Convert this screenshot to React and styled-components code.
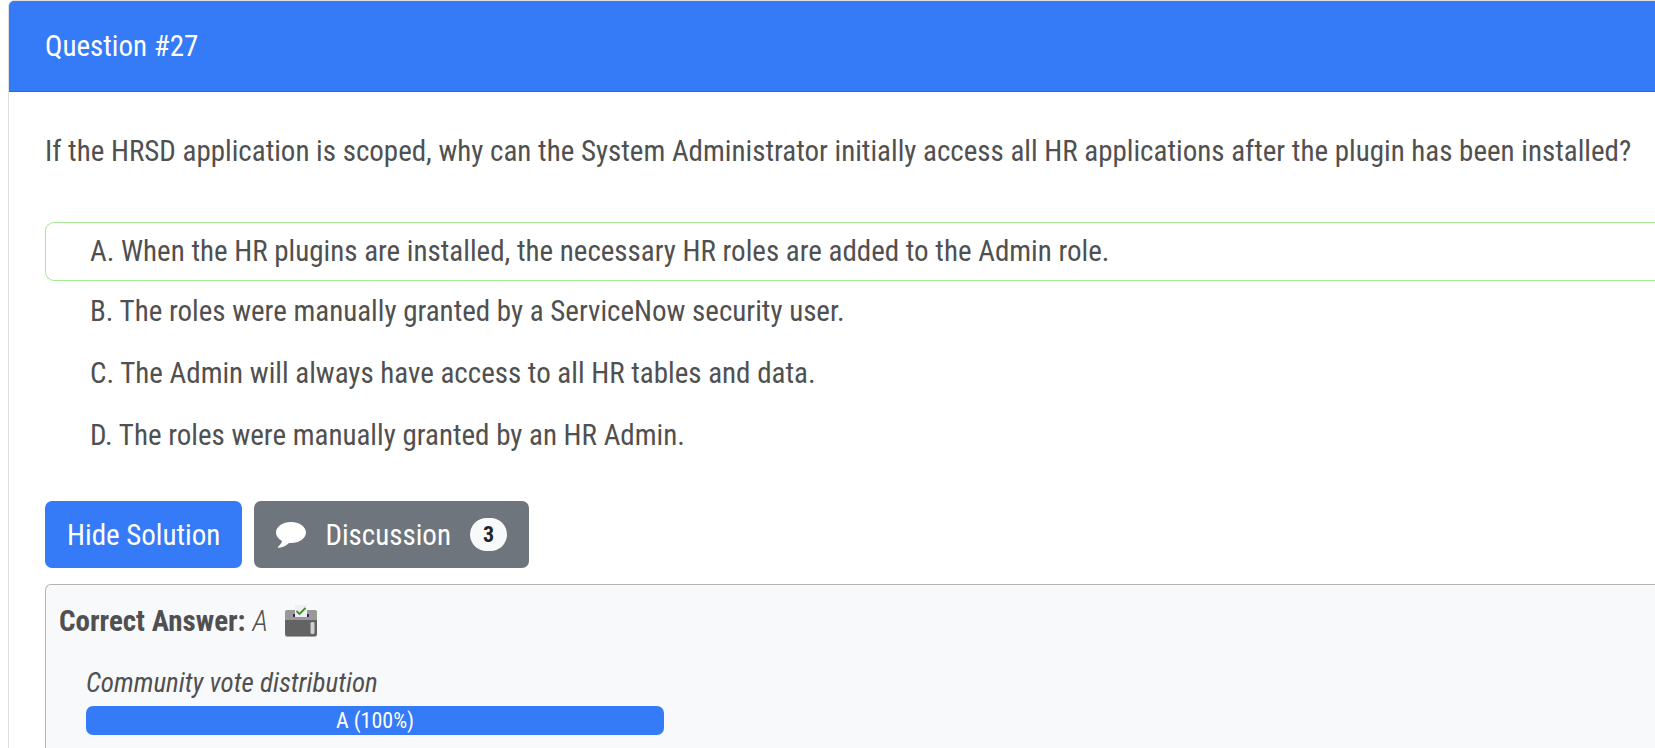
import React from 'react';
import styled, { createGlobalStyle } from 'styled-components';

const GlobalStyle = createGlobalStyle`
  *, *::before, *::after { box-sizing: border-box; }
  body {
    margin: 0;
    background: #fff;
    color: #505050;
    font-family: "Roboto Condensed", Roboto, "Liberation Sans", sans-serif;
    font-size: 29px;
    font-weight: 400;
    line-height: 44px;
  }
`;

const Card = styled.article`
  display: flex;
  flex-direction: column;
  min-height: 100vh;
  margin-left: 8px;
  border: 1px solid #dfdfdf;
  border-width: 1px 0 0 1px;
  border-top-left-radius: 6px;
`;

const CardHeader = styled.header`
  padding: 23px 36px;
  border-bottom: 1px solid #2c68d8;
  border-top-left-radius: 5px;
  background: #357af6;
  color: #fff;
`;

const Title = styled.h1`
  margin: 0;
  font-size: inherit;
  font-weight: 400;
`;

const CardBody = styled.div`
  display: flex;
  flex: 1;
  flex-direction: column;
  padding: 37px 0 0 36px;
`;

const QuestionText = styled.p`
  margin: 0 0 49px;
`;

const Choices = styled.ol`
  margin: 0 0 34px;
  padding: 0;
  list-style: none;
`;

const Choice = styled.li`
  padding: ${(p) => (p.$correct ? '6px 44px 7px' : '8px 45px 10px')};
  border: solid #a5ea94;
  border-width: ${(p) => (p.$correct ? '1px 0 1px 1px' : '0')};
  border-radius: 9px 0 0 9px;
`;

const Actions = styled.div`
  display: flex;
  flex-wrap: wrap;
  gap: 12px;
  margin-bottom: 16px;
`;

const Button = styled.button`
  display: inline-flex;
  align-items: center;
  height: 67px;
  padding: 0 22px;
  border: 0;
  border-radius: 7px;
  background: ${(p) => (p.$secondary ? '#6e757c' : '#357af6')};
  color: #fff;
  font: inherit;
  cursor: pointer;
`;

const Bubble = styled.svg`
  width: 30px;
  height: 26px;
  margin-right: 19px;
`;

const Badge = styled.span`
  margin-left: 19px;
  padding: 0 13px;
  border-radius: 17px;
  background: #f8f9fb;
  color: #212529;
  font-size: 22px;
  font-weight: 700;
  line-height: 33px;
`;

const Solution = styled.section`
  flex: 1;
  padding: 14px 13px;
  border: solid #b4b4b4;
  border-width: 1px 0 0 1px;
  border-top-left-radius: 6px;
  background: #f8f9fb;
`;

const Answer = styled.p`
  display: flex;
  align-items: center;
  gap: 7px;
  margin: 0;

  strong { font-weight: 700; }
  em { font-weight: 300; }
`;

const BallotBox = styled.svg`
  width: 32px;
  height: 32px;
  margin-left: 10px;
`;

const Votes = styled.figure`
  margin: 22px 27px 0;
`;

const VotesCaption = styled.figcaption`
  font-size: 27px;
  font-style: italic;
  line-height: 36px;
`;

const VoteTrack = styled.div`
  display: flex;
  max-width: 578px;
  margin-top: 5px;
  border-radius: 7px;
  overflow: hidden;
`;

const VoteBar = styled.div`
  background: #357af6;
  color: #fff;
  font-size: 22px;
  line-height: 29px;
  text-align: center;
`;

const choices = [
  { letter: 'A', text: 'When the HR plugins are installed, the necessary HR roles are added to the Admin role.', correct: true },
  { letter: 'B', text: 'The roles were manually granted by a ServiceNow security user.' },
  { letter: 'C', text: 'The Admin will always have access to all HR tables and data.' },
  { letter: 'D', text: 'The roles were manually granted by an HR Admin.' },
];

const votes = [{ letter: 'A', share: 100 }];

export default function App() {
  return (
    <>
      <GlobalStyle />
      <Card>
        <CardHeader>
          <Title>Question #27</Title>
        </CardHeader>
        <CardBody>
          <QuestionText>
            If the HRSD application is scoped, why can the System Administrator initially access all HR
            applications after the plugin has been installed?
          </QuestionText>
          <Choices>
            {choices.map((c) => (
              <Choice key={c.letter} $correct={c.correct}>
                {`${c.letter}. ${c.text}`}
              </Choice>
            ))}
          </Choices>
          <Actions>
            <Button type="button">Hide Solution</Button>
            <Button type="button" $secondary>
              <Bubble viewBox="0 0 30 26" aria-hidden="true">
                <path
                  fill="#fff"
                  d="M15 0C6.700 0 0 4.700 0 10.600c0 3.500 2.300 6.600 6 8.500C5.600 21.500 4 23.200 2.300 24.500c-.8.600-.5 1.400.5 1.300 4-.4 7.700-2.200 10.200-4.800.7.100 1.300.1 2 .1 8.300 0 15-4.700 15-10.500S23.300 0 15 0z"
                />
              </Bubble>
              Discussion
              <Badge>3</Badge>
            </Button>
          </Actions>
          <Solution>
            <Answer>
              <strong>Correct Answer:</strong>
              <em>A</em>
              <BallotBox viewBox="0 0 32 32" aria-hidden="true">
                <rect x="0" y="5" width="32" height="27" rx="2.500" fill="#a6a6a6" />
                <path fill="#999" d="M2.500 5h27A2.500 2.500 0 0 1 32 7.500V15H0V7.500A2.500 2.500 0 0 1 2.500 5z" />
                <path fill="#636363" d="M0 15h32v13.500a2.500 2.500 0 0 1-2.500 2.500h-27A2.500 2.500 0 0 1 0 28.500z" />
                <rect x="8" y="9" width="16" height="3" rx="1" fill="#321b41" />
                <rect x="10" y="0" width="12" height="12" fill="#f0eef8" />
                <path fill="none" stroke="#44911b" strokeWidth="1.800" d="M11.500 6l3 3L20.500 3" />
                <rect x="25.500" y="17" width="4" height="12" rx="1.500" fill="#d0d0d0" />
              </BallotBox>
            </Answer>
            <Votes>
              <VotesCaption>Community vote distribution</VotesCaption>
              <VoteTrack>
                {votes.map((v) => (
                  <VoteBar key={v.letter} style={{ width: `${v.share}%` }}>
                    {`${v.letter} (${v.share}%)`}
                  </VoteBar>
                ))}
              </VoteTrack>
            </Votes>
          </Solution>
        </CardBody>
      </Card>
    </>
  );
}
